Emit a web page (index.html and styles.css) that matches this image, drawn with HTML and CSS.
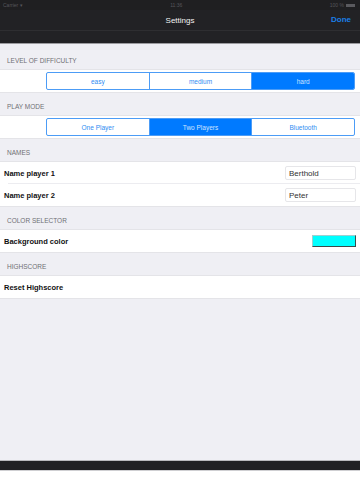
FILE: index.html
```html
<!DOCTYPE html>
<html lang="en">
<head>
    <meta charset="UTF-8">
    <meta name="viewport" content="width=device-width, initial-scale=1.0">
    <title>Settings</title>
    <link rel="stylesheet" href="styles.css">
</head>
<body>
    <div class="status-bar">
        <span class="carrier">Carrier &#9662;</span>
        <span class="clock">11:36</span>
        <span class="battery">100 % <span class="battery-icon"></span></span>
    </div>
    <header class="nav-bar">
        <span class="nav-title">Settings</span>
        <span class="nav-done">Done</span>
    </header>
    <div class="sub-bar"></div>

    <main class="content">
        <div class="section-title first">Level of difficulty</div>
        <div class="row segment-row">
            <div class="segmented">
                <span class="segment">easy</span>
                <span class="segment">medium</span>
                <span class="segment selected">hard</span>
            </div>
        </div>

        <div class="section-title">Play mode</div>
        <div class="row segment-row">
            <div class="segmented">
                <span class="segment">One Player</span>
                <span class="segment selected">Two Players</span>
                <span class="segment">Bluetooth</span>
            </div>
        </div>

        <div class="section-title">Names</div>
        <div class="group">
            <div class="cell divided">
                <span class="label">Name player 1</span>
                <span class="text-field">Berthold</span>
            </div>
            <div class="cell">
                <span class="label">Name player 2</span>
                <span class="text-field">Peter</span>
            </div>
        </div>

        <div class="section-title">Color selector</div>
        <div class="group">
            <div class="cell">
                <span class="label">Background color</span>
                <span class="swatch"></span>
            </div>
        </div>

        <div class="section-title">Highscore</div>
        <div class="group">
            <div class="cell">
                <span class="label">Reset Highscore</span>
            </div>
        </div>
    </main>

    <footer class="tool-bar"></footer>
    <div class="bottom-space"></div>
</body>
</html>
```

FILE: styles.css
```css
body {
    margin: 0;
    width: 360px;
    height: 480px;
    display: flex;
    flex-direction: column;
    font-family: "Liberation Sans", Arial, sans-serif;
    overflow: hidden;
}

.status-bar {
    height: 10px;
    background: #1f1f21;
    color: #56565b;
    font-size: 5px;
    display: flex;
    align-items: center;
    justify-content: space-between;
    padding: 0 5px 0 3px;
}

.battery {
    display: flex;
    align-items: center;
    gap: 2px;
}

.battery-icon {
    width: 9px;
    height: 3px;
    background: #5a5a5e;
}

.nav-bar {
    height: 20px;
    background: #222225;
    display: flex;
    align-items: center;
    justify-content: center;
    position: relative;
}

.nav-title {
    color: #f2f2f2;
    font-size: 8px;
}

.nav-done {
    position: absolute;
    right: 9px;
    top: 5px;
    color: #1a7fe8;
    font-size: 8px;
    font-weight: bold;
}

.sub-bar {
    height: 12px;
    background: #222225;
    border-top: 1px solid #2e2e31;
    border-bottom: 1px solid #9b9b9f;
}

.content {
    flex: 1;
    background: #efeff4;
}

.section-title {
    height: 22px;
    box-sizing: border-box;
    display: flex;
    align-items: flex-end;
    padding: 0 0 5px 7px;
    color: #707075;
    font-size: 6.5px;
    text-transform: uppercase;
}

.section-title.first {
    height: 25px;
}

.row,
.group {
    background: #fff;
    border-top: 1px solid #e4e4e8;
    border-bottom: 1px solid #e4e4e8;
}

.segment-row {
    padding: 2px 5px 2px 46px;
}

.segmented {
    display: flex;
    height: 18px;
    border: 1px solid #4c9cf6;
    border-radius: 2px;
    box-sizing: border-box;
    overflow: hidden;
}

.segment {
    flex: 1;
    display: flex;
    align-items: center;
    justify-content: center;
    color: #2f8cf2;
    font-size: 6.5px;
    border-left: 1px solid #4c9cf6;
}

.segment:first-child {
    border-left: none;
}

.segment.selected {
    background: #007aff;
    color: #cfe4ff;
}

.cell {
    height: 22px;
    display: flex;
    align-items: center;
    justify-content: space-between;
    padding: 0 4px 0 4px;
    position: relative;
}

.cell.divided::after {
    content: "";
    position: absolute;
    left: 8px;
    right: 0;
    bottom: 0;
    border-bottom: 1px solid #ececf0;
}

.label {
    font-size: 7.5px;
    font-weight: bold;
    color: #111;
}

.text-field {
    width: 71px;
    height: 14px;
    box-sizing: border-box;
    border: 1px solid #e6e6e9;
    border-radius: 2px;
    padding-left: 3px;
    display: flex;
    align-items: center;
    font-size: 8px;
    color: #333;
}

.swatch {
    width: 44px;
    height: 12px;
    box-sizing: border-box;
    background: #00ffff;
    border: 1px solid #9ecfcf;
    border-right-color: #3b4b4b;
    border-bottom-color: #3b4b4b;
}

.tool-bar {
    height: 9px;
    background: #202023;
    border-top: 1px solid #b8b8bc;
}

.bottom-space {
    height: 9px;
    background: #fff;
    border-top: 1px solid #cfcfd2;
}
```
